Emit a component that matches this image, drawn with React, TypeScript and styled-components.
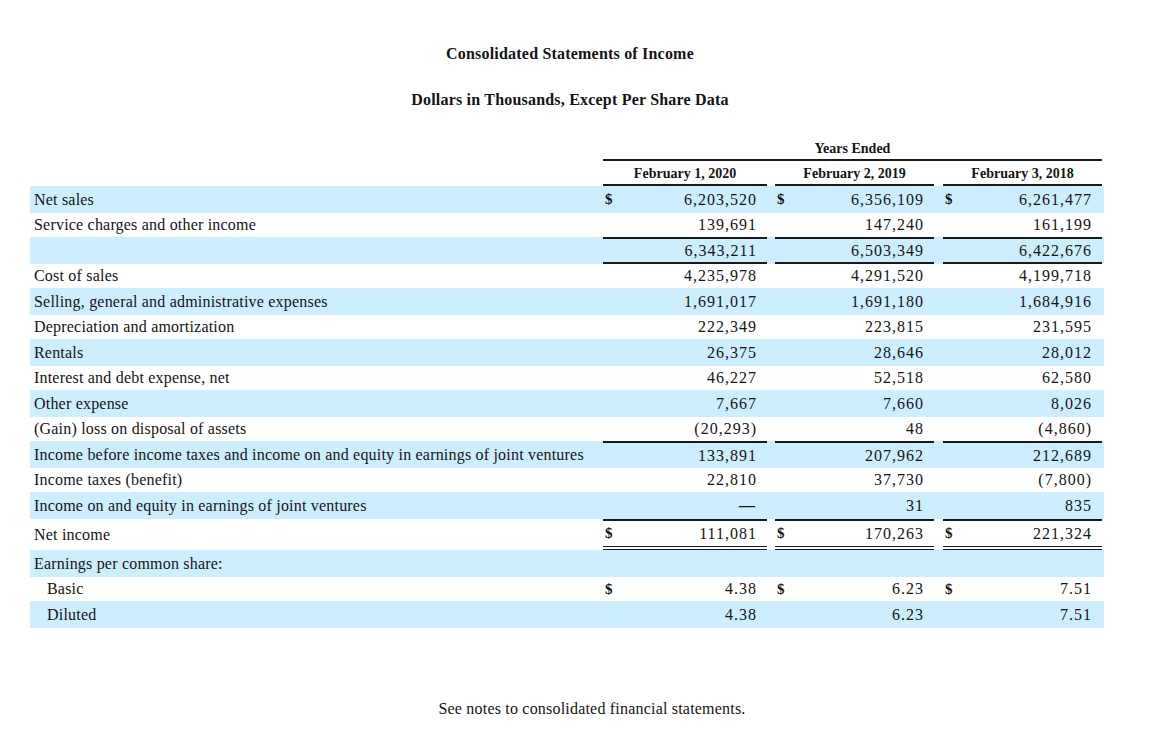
import * as React from 'react';
import styled, { createGlobalStyle } from 'styled-components';

type Values = [string, string, string];

interface Row {
  label: string;
  values: Values;
  dollar?: boolean;
  top?: boolean;
  bottom?: 'single' | 'double';
  indent?: boolean;
}

const rows: Row[] = [
  { label: 'Net sales', values: ['6,203,520', '6,356,109', '6,261,477'], dollar: true },
  { label: 'Service charges and other income', values: ['139,691', '147,240', '161,199'] },
  { label: '', values: ['6,343,211', '6,503,349', '6,422,676'], top: true, bottom: 'single' },
  { label: 'Cost of sales', values: ['4,235,978', '4,291,520', '4,199,718'] },
  { label: 'Selling, general and administrative expenses', values: ['1,691,017', '1,691,180', '1,684,916'] },
  { label: 'Depreciation and amortization', values: ['222,349', '223,815', '231,595'] },
  { label: 'Rentals', values: ['26,375', '28,646', '28,012'] },
  { label: 'Interest and debt expense, net', values: ['46,227', '52,518', '62,580'] },
  { label: 'Other expense', values: ['7,667', '7,660', '8,026'] },
  { label: '(Gain) loss on disposal of assets', values: ['(20,293)', '48', '(4,860)'] },
  {
    label: 'Income before income taxes and income on and equity in earnings of joint ventures',
    values: ['133,891', '207,962', '212,689'],
    top: true,
  },
  { label: 'Income taxes (benefit)', values: ['22,810', '37,730', '(7,800)'] },
  { label: 'Income on and equity in earnings of joint ventures', values: ['—', '31', '835'] },
  { label: 'Net income', values: ['111,081', '170,263', '221,324'], dollar: true, top: true, bottom: 'double' },
  { label: 'Earnings per common share:', values: ['', '', ''] },
  { label: 'Basic', values: ['4.38', '6.23', '7.51'], dollar: true, indent: true },
  { label: 'Diluted', values: ['4.38', '6.23', '7.51'], indent: true },
];

const years = ['February 1, 2020', 'February 2, 2019', 'February 3, 2018'];

export default function App() {
  return (
    <>
      <GlobalStyle />
      <Page>
        <Title>Consolidated Statements of Income</Title>
        <Subtitle>Dollars in Thousands, Except Per Share Data</Subtitle>
        <Table>
          <HeadRow>
            <span />
            <YearsEnded>Years Ended</YearsEnded>
          </HeadRow>
          <DateRow>
            <span />
            <DateCell>{years[0]}</DateCell>
            <span />
            <DateCell>{years[1]}</DateCell>
            <span />
            <DateCell>{years[2]}</DateCell>
          </DateRow>
          {rows.map((row, i) => {
            const shaded = i % 2 === 0;
            const cells = row.values.map((v, j) => (
              <ValueCell key={j} $top={row.top} $bottom={row.bottom}>
                <Dollar>{row.dollar ? '$' : ''}</Dollar>
                <Num $dash={v === '—'}>{v}</Num>
              </ValueCell>
            ));
            return (
              <BodyRow key={i} $shaded={shaded} $tall={row.bottom === 'double'}>
                <Label $indent={row.indent}>{row.label}</Label>
                {cells[0]}
                <span />
                {cells[1]}
                <span />
                {cells[2]}
              </BodyRow>
            );
          })}
        </Table>
        <Footnote>See notes to consolidated financial statements.</Footnote>
      </Page>
    </>
  );
}

const GlobalStyle = createGlobalStyle`
  body {
    margin: 0;
    background: #fff;
    color: #141414;
    font-family: "Liberation Serif", "Times New Roman", serif;
  }
`;

const Page = styled.div`
  width: 1080px;
  margin-left: 30px;
  padding-top: 45px;
  font-size: 16px;
  letter-spacing: 0.2px;
`;

const Title = styled.div`
  text-align: center;
  font-weight: bold;
  line-height: 18px;
`;

const Subtitle = styled(Title)`
  margin-top: 28px;
`;

const columns = '573px 164px 8px 159px 9px 159px';

const Table = styled.div`
  margin-top: 30px;
  width: 1074px;
`;

const HeadRow = styled.div`
  display: grid;
  grid-template-columns: 573px 499px;
  height: 22px;
`;

const YearsEnded = styled.div`
  border-bottom: 2px solid #1a1a1a;
  text-align: center;
  font-weight: bold;
  font-size: 14px;
  letter-spacing: 0;
  line-height: 20px;
`;

const DateRow = styled.div`
  display: grid;
  grid-template-columns: ${columns};
  height: 25px;
`;

const DateCell = styled.div`
  border-bottom: 2px solid #1a1a1a;
  text-align: center;
  font-weight: bold;
  font-size: 14px;
  letter-spacing: 0;
  line-height: 21px;
  padding-top: 2px;
`;

const BodyRow = styled.div<{ $shaded: boolean; $tall?: boolean }>`
  display: grid;
  grid-template-columns: ${columns};
  height: ${(p) => (p.$tall ? 31 : p.$shaded ? 27 : 24)}px;
  background: ${(p) => (p.$shaded ? '#cceeff' : 'transparent')};
`;

const Label = styled.div<{ $indent?: boolean }>`
  display: flex;
  align-items: center;
  padding-left: ${(p) => (p.$indent ? 17 : 4)}px;
  white-space: nowrap;
`;

const ValueCell = styled.div<{ $top?: boolean; $bottom?: 'single' | 'double' }>`
  display: flex;
  align-items: center;
  justify-content: space-between;
  padding: 0 11px 0 2px;
  box-sizing: border-box;
  border-top: ${(p) => (p.$top ? '2px solid #1a1a1a' : 'none')};
  border-bottom: ${(p) =>
    p.$bottom === 'double' ? '4px double #1a1a1a' : p.$bottom === 'single' ? '2px solid #1a1a1a' : 'none'};
`;

const Dollar = styled.span`
  font-weight: bold;
  font-size: 15px;
`;

const Num = styled.span<{ $dash?: boolean }>`
  letter-spacing: ${(p) => (p.$dash ? 0 : 1)}px;
  margin-right: ${(p) => (p.$dash ? 1 : -1)}px;
  font-weight: ${(p) => (p.$dash ? 'bold' : 'normal')};
`;

const Footnote = styled.div`
  margin-top: 72px;
  padding-left: 44px;
  text-align: center;
`;
